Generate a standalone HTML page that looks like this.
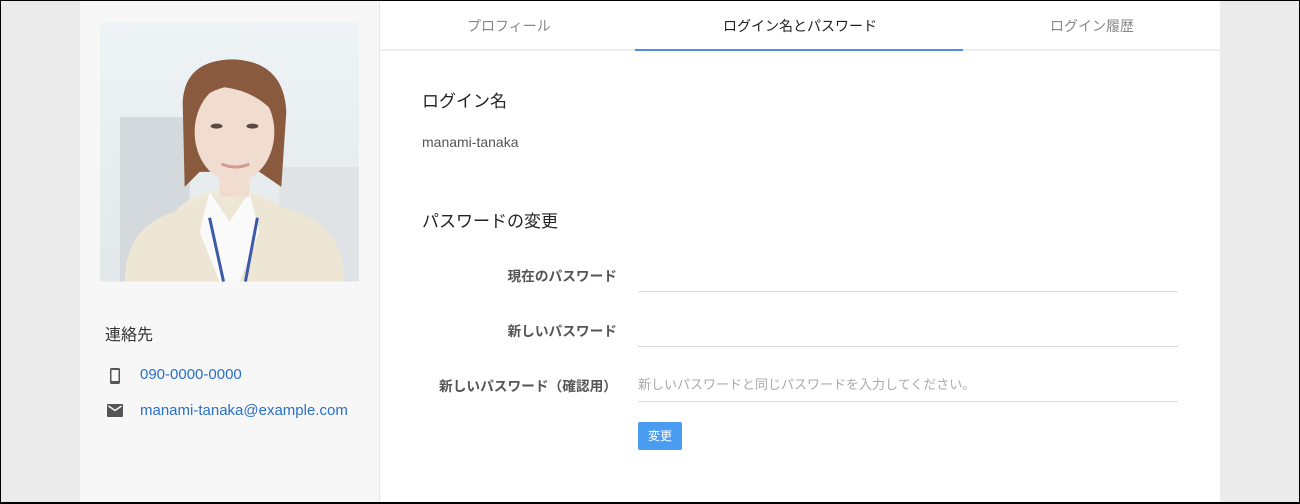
<!DOCTYPE html>
<html><head><meta charset="utf-8"><style>
*{margin:0;padding:0;box-sizing:border-box}
html,body{width:1300px;height:504px;overflow:hidden}
body{background:#ebebeb;font-family:"Liberation Sans","Noto Sans CJK JP",sans-serif;position:relative;border:1px solid #000;border-bottom:2px solid #000}
.side{position:absolute;left:79px;top:0;width:300px;height:501px;background:#f7f7f7;border-right:1px solid #e6e6e6}
.main{position:absolute;left:379px;top:0;width:840px;height:501px;background:#fff}
.photo{position:absolute;left:20px;top:21px;width:259px;height:260px}
.t{position:absolute;white-space:nowrap}
.tabs{position:absolute;left:0;top:0;width:840px;height:50px;border-bottom:2px solid #eee}
.tab{position:absolute;top:15px;font-size:14px;color:#888}
.ul{position:absolute;left:255px;top:48px;width:328px;height:2px;background:#4a90e2}
.lbl{position:absolute;font-size:13.7px;font-weight:bold;color:#555;text-align:right;width:237px;left:0}
.line{position:absolute;left:258px;width:540px;height:1px;background:#ddd}
a{color:#2a6fc9;text-decoration:none}
</style></head><body>
<div class="side">
<svg class="photo" viewBox="0 0 260 260">
<defs><linearGradient id="sky" x1="0" y1="0" x2="0" y2="1"><stop offset="0" stop-color="#eef3f6"/><stop offset="1" stop-color="#e3e8ea"/></linearGradient></defs>
<rect width="260" height="260" fill="url(#sky)"/>
<rect x="20" y="95" width="70" height="165" fill="#d3d9dd"/>
<rect x="180" y="145" width="80" height="115" fill="#dfe3e5"/>
<path d="M60 235 Q60 175 130 165 Q200 175 205 235 L205 260 L55 260Z" fill="#efe9dd"/>
<path d="M25 260 Q25 205 75 190 L110 172 L130 180 L150 172 L195 190 Q245 205 245 260Z" fill="#ede6d5"/>
<path d="M110 170 L130 200 L150 170 L160 210 L140 260 L120 260 L100 210Z" fill="#fafafa"/>
<path d="M110 196 L124 260 M158 196 L146 260" stroke="#3d5aa8" stroke-width="3" fill="none"/>
<path d="M83 80 Q85 37 135 37 Q185 40 187 90 L182 165 L160 150 L100 150 L85 165Z" fill="#8a5a3e"/>
<ellipse cx="135" cy="110" rx="40" ry="50" fill="#f1ddd0"/>
<rect x="120" y="150" width="30" height="25" fill="#f1ddd0"/>
<path d="M95 85 Q110 45 150 50 Q180 60 185 105 Q165 70 125 65 Q105 70 95 85Z" fill="#8a5a3e"/>
<ellipse cx="117" cy="104" rx="6" ry="2.5" fill="#5a4a44"/><ellipse cx="153" cy="104" rx="6" ry="2.5" fill="#5a4a44"/>
<path d="M122 142 Q136 148 150 142" stroke="#d49a90" stroke-width="3" fill="none"/>
</svg>
<div class="t" style="left:25px;top:320px;font-size:16px;color:#333">連絡先</div>
<svg class="t" style="left:28px;top:366px" width="14" height="18" viewBox="0 0 14 18"><rect x="2" y="1" width="10" height="16" rx="1.5" fill="#555"/><rect x="3.5" y="3" width="7" height="11" fill="#f7f7f7"/></svg>
<div class="t" style="left:60px;top:365px;font-size:15px"><a>090-0000-0000</a></div>
<svg class="t" style="left:27px;top:403px" width="16" height="13" viewBox="0 0 16 13"><rect width="16" height="13" rx="1" fill="#555"/><path d="M1.5 2 L8 6.5 L14.5 2" stroke="#f7f7f7" stroke-width="1.5" fill="none"/></svg>
<div class="t" style="left:60px;top:401px;font-size:15px"><a>manami-tanaka@example.com</a></div>
</div>
<div class="main">
<div class="tabs">
<div class="tab" style="left:87px">プロフィール</div>
<div class="tab" style="left:343px;color:#222">ログイン名とパスワード</div>
<div class="tab" style="left:670px">ログイン履歴</div>
<div class="ul"></div>
</div>
<div class="t" style="left:42px;top:86px;font-size:17px;color:#222">ログイン名</div>
<div class="t" style="left:42px;top:133px;font-size:14px;color:#555">manami-tanaka</div>
<div class="t" style="left:42px;top:206px;font-size:17px;color:#222">パスワードの変更</div>
<div class="lbl" style="top:264px">現在のパスワード</div>
<div class="line" style="top:290px"></div>
<div class="lbl" style="top:319px">新しいパスワード</div>
<div class="line" style="top:345px"></div>
<div class="lbl" style="top:374px">新しいパスワード（確認用）</div>
<div class="t" style="left:258px;top:373px;font-size:13px;color:#aaa">新しいパスワードと同じパスワードを入力してください。</div>
<div class="line" style="top:400px"></div>
<div class="t" style="left:258px;top:421px;width:44px;height:28px;background:#4a9cf0;border-radius:2px;color:#fff;font-size:12px;text-align:center;line-height:28px">変更</div>
</div>
</body></html>
